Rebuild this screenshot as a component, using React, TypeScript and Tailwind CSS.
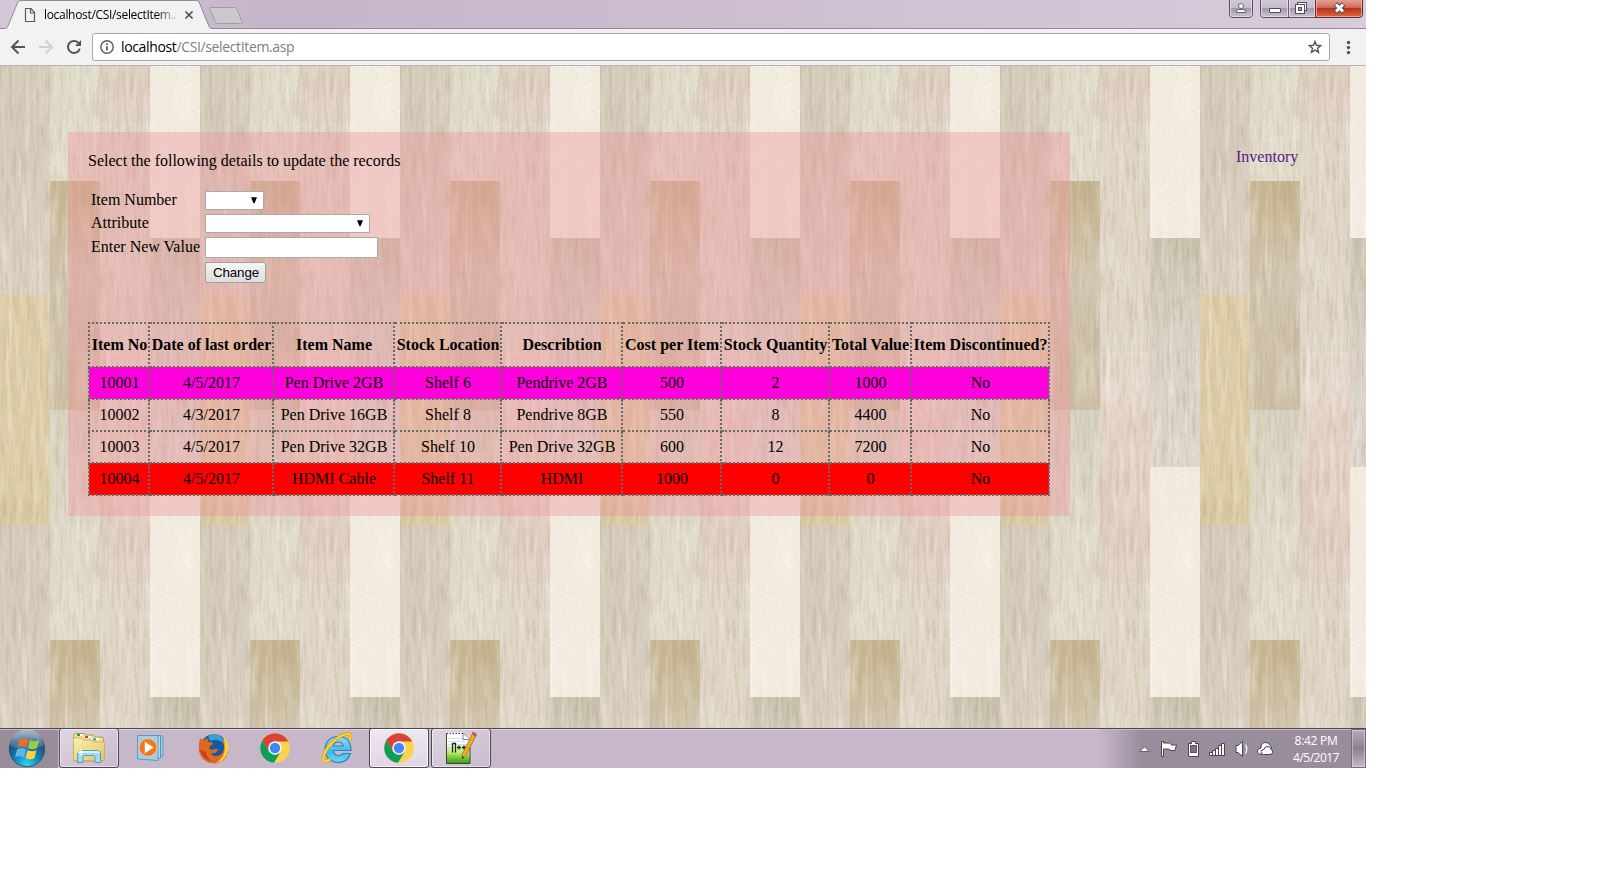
import React from "react";

const headers = [
  "Item No",
  "Date of last order",
  "Item Name",
  "Stock Location",
  "Describtion",
  "Cost per Item",
  "Stock Quantity",
  "Total Value",
  "Item Discontinued?",
];

const columnWidths = [60, 124, 121, 107, 121, 99, 108, 82, 138];

const rows = [
  { tone: "bg-[#ff00dc]", cells: ["10001", "4/5/2017", "Pen Drive 2GB", "Shelf 6", "Pendrive 2GB", "500", "2", "1000", "No"] },
  { tone: "", cells: ["10002", "4/3/2017", "Pen Drive 16GB", "Shelf 8", "Pendrive 8GB", "550", "8", "4400", "No"] },
  { tone: "", cells: ["10003", "4/5/2017", "Pen Drive 32GB", "Shelf 10", "Pen Drive 32GB", "600", "12", "7200", "No"] },
  { tone: "bg-[#ff0000]", cells: ["10004", "4/5/2017", "HDMI Cable", "Shelf 11", "HDMI", "1000", "0", "0", "No"] },
];

/* Repeating 200x459 wood plank texture */
function WoodBackground() {
  return (
    <svg className="absolute inset-0" width="1366" height="662" aria-hidden="true">
      <defs>
        <linearGradient id="p1" x1="0" y1="0" x2="0.3" y2="1">
          <stop offset="0" stopColor="#d1c8b5" />
          <stop offset="1" stopColor="#dcd1c3" />
        </linearGradient>
        <linearGradient id="p1b" x1="0" y1="0" x2="0" y2="1">
          <stop offset="0" stopColor="#decfa9" />
          <stop offset="1" stopColor="#ddcda4" />
        </linearGradient>
        <linearGradient id="p2" x1="0" y1="0" x2="0" y2="1">
          <stop offset="0" stopColor="#c6b48e" />
          <stop offset="0.45" stopColor="#d2c6b0" />
          <stop offset="1" stopColor="#cdbfa4" />
        </linearGradient>
        <linearGradient id="p2b" x1="0" y1="0" x2="0" y2="1">
          <stop offset="0" stopColor="#d6d2bf" />
          <stop offset="1" stopColor="#e0dac9" />
        </linearGradient>
        <linearGradient id="p3" x1="0" y1="0" x2="0" y2="1">
          <stop offset="0" stopColor="#e8dacf" />
          <stop offset="1" stopColor="#e1cec0" />
        </linearGradient>
        <linearGradient id="p4" x1="0" y1="0" x2="0" y2="1">
          <stop offset="0" stopColor="#c9c2ae" />
          <stop offset="0.4" stopColor="#d9d3c6" />
          <stop offset="1" stopColor="#ddd7ce" />
        </linearGradient>
        <filter id="grainDark" x="0" y="0" width="1" height="1">
          <feTurbulence type="fractalNoise" baseFrequency="0.3 0.035" numOctaves="4" seed="4" stitchTiles="stitch" />
          <feColorMatrix values="0 0 0 0 0.36  0 0 0 0 0.27  0 0 0 0 0.16  1.2 0 0 0 -0.52" />
        </filter>
        <filter id="grainLight" x="0" y="0" width="1" height="1">
          <feTurbulence type="fractalNoise" baseFrequency="0.16 0.018" numOctaves="3" seed="11" stitchTiles="stitch" />
          <feColorMatrix values="0 0 0 0 1  0 0 0 0 0.98  0 0 0 0 0.94  0 2 0 0 -0.85" />
        </filter>
        <filter id="speck" x="0" y="0" width="1" height="1">
          <feTurbulence type="fractalNoise" baseFrequency="0.5 0.3" numOctaves="2" seed="7" stitchTiles="stitch" />
          <feColorMatrix values="0 0 0 0 0.4  0 0 0 0 0.33  0 0 0 0 0.22  0 0 1 0 -0.45" />
        </filter>
        <pattern id="wood" width="200" height="459" patternUnits="userSpaceOnUse">
          <rect x="0" y="0" width="50" height="230" fill="url(#p1)" />
          <rect x="0" y="229" width="50" height="230" fill="url(#p1b)" />
          <rect x="50" y="0" width="50" height="115" fill="#e2dccb" />
          <rect x="50" y="115" width="50" height="229" fill="url(#p2)" />
          <rect x="50" y="344" width="50" height="115" fill="url(#p2b)" />
          <rect x="100" y="0" width="50" height="57" fill="#e1d1c3" />
          <rect x="100" y="57" width="50" height="229" fill="#e0d7c7" />
          <rect x="100" y="286" width="50" height="173" fill="url(#p3)" />
          <rect x="150" y="0" width="50" height="172" fill="#f3ece1" />
          <rect x="150" y="172" width="50" height="229" fill="url(#p4)" />
          <rect x="150" y="401" width="50" height="58" fill="#f2ebde" />
          <rect width="200" height="459" filter="url(#grainLight)" opacity="0.4" />
          <rect width="150" height="459" filter="url(#grainDark)" opacity="0.5" />
          <rect x="150" y="172" width="50" height="229" filter="url(#grainDark)" opacity="0.6" />
          <rect width="200" height="459" filter="url(#speck)" opacity="0.28" />
        </pattern>
      </defs>
      <rect width="1366" height="662" fill="url(#wood)" />
    </svg>
  );
}

function TabStrip() {
  return (
    <header className="relative h-[29px] bg-linear-to-r from-[#d4c8d8] from-0% via-[#c4b5c8] via-20% to-[#d8ccdb]">
      <svg className="absolute inset-0" width="1366" height="29" fill="none">
        <path d="M0 28.5H5.5C7 28 7.5 27 8 26L17.5 3C18.3 1.2 19 .5 21 .5H196C198 .5 198.800 1.200 199.500 3L208.500 25C209.500 27.500 210.500 28.500 212 28.500H1366" stroke="#94859a" />
        <path d="M6 29C7.500 28.500 8 27 8.500 26L18 3.500C18.700 1.700 19.500 1 21 1H196C197.500 1 198.300 1.700 199 3.500L208 25.500C209 28 210 29 211.500 29Z" fill="#f2f2f2" />
        <path d="M211 7.500H234C235.500 7.500 236.300 8 237 9.500L242 21.500C242.700 23 242 23.500 240.500 23.500H218.500C216.800 23.500 216 23 215.300 21.500L210 9.500C209.400 8.200 209.800 7.500 211 7.500Z" fill="#cbc9cc" stroke="#a598aa" />
        <path d="M25.500 8.500H31L34.500 12.500V21.500H25.500ZM30.500 8.500V13H34.500" stroke="#5a5a5a" strokeWidth="1.200" />
        <path d="M185.500 11.500L192.500 18.500M192.500 11.500L185.500 18.500" stroke="#505050" strokeWidth="1.700" />
      </svg>
      <div className="relative ml-11 w-[134px] pt-[6px] font-['Open_Sans',sans-serif] text-[12px] leading-[18px] tracking-[-0.32px] whitespace-nowrap text-black [mask-image:linear-gradient(to_right,black_112px,transparent_134px)]">
        localhost/CSI/selectItem.a
      </div>
      <svg className="absolute top-0 right-0" width="140" height="20" viewBox="1226 0 140 20">
        <defs>
          <linearGradient id="glass" x1="0" y1="0" x2="0" y2="1">
            <stop offset="0" stopColor="#d5cad9" />
            <stop offset=".48" stopColor="#c5b9ca" />
            <stop offset=".5" stopColor="#a295a9" />
            <stop offset="1" stopColor="#cfc4d4" />
          </linearGradient>
          <linearGradient id="close" x1="0" y1="0" x2="0" y2="1">
            <stop offset="0" stopColor="#e3a59a" />
            <stop offset=".45" stopColor="#d0705f" />
            <stop offset=".5" stopColor="#b93017" />
            <stop offset="1" stopColor="#dd6b45" />
          </linearGradient>
        </defs>
        <path d="M1229.500 -1V14Q1229.500 17.500 1233 17.500H1249Q1252.500 17.500 1252.500 14V-1Z" fill="url(#glass)" stroke="#5a4f60" />
        <path d="M1230.500 0V14Q1230.500 16.500 1233 16.500H1249Q1251.500 16.500 1251.500 14V0" fill="none" stroke="#e9e0ec" strokeOpacity=".8" />
        <path d="M1260.500 -1V14Q1260.500 17.500 1264 17.500H1315.500V-1Z" fill="url(#glass)" stroke="#5a4f60" />
        <path d="M1261.500 0V14Q1261.500 16.500 1264 16.500H1287.500V0M1289.500 0V16.500H1314.500V0" fill="none" stroke="#e9e0ec" strokeOpacity=".8" />
        <path d="M1288.500 0V17" stroke="#6a5f70" />
        <path d="M1315.500 -1V17.500H1359Q1362.500 17.500 1362.500 14V-1Z" fill="url(#close)" stroke="#5a2d30" />
        <path d="M1316.500 0V16.500H1359Q1361.500 16.500 1361.500 14V0" fill="none" stroke="#f3c0ae" strokeOpacity=".7" />
        <circle cx="1241" cy="6" r="2.500" fill="#fff" stroke="#6a6270" />
        <path d="M1236.500 12.500V11Q1237 9.500 1239 9.500H1243Q1245 9.500 1245.500 11V12.500Z" fill="#fff" stroke="#6a6270" />
        <rect x="1269.500" y="8.500" width="11" height="4" rx=".5" fill="#fff" stroke="#4f4b58" />
        <rect x="1297.500" y="2.500" width="9" height="8" fill="#fff" stroke="#4f4b58" />
        <rect x="1295.500" y="4.500" width="9" height="9" fill="#fff" stroke="#4f4b58" />
        <rect x="1298.500" y="7.500" width="3" height="3" fill="#a79cae" stroke="#4f4b58" />
        <path d="M1335.500 4L1343.500 12M1343.500 4L1335.500 12" stroke="#544850" strokeWidth="5" />
        <path d="M1336 4.500L1343 11.500M1343 4.500L1336 11.500" stroke="#fff" strokeWidth="3" />
      </svg>
    </header>
  );
}

function Toolbar() {
  return (
    <div className="flex h-[37px] items-start border-b border-[#b5b2b6] bg-[#f2f2f2] pt-1">
      <svg width="92" height="28" viewBox="0 33 92 28" fill="none">
        <path d="M25 47H12.500M18.500 40.500L12 47L18.500 53.500" stroke="#555" strokeWidth="2" />
        <path d="M39 47H51.500M45.500 40.500L52 47L45.500 53.500" stroke="#d0d0d0" strokeWidth="2" />
        <path d="M78.300 42.700A6 6 0 1 0 79.800 48.600" stroke="#555" strokeWidth="2" />
        <path d="M81 40V46H75Z" fill="#555" />
      </svg>
      <div className="flex h-7 w-[1238px] items-center rounded-[3px] border border-[#a8a8a8] bg-white pr-[7px] pl-[7px]">
        <svg width="14" height="14" viewBox="0 0 14 14" fill="none">
          <circle cx="7" cy="7" r="6.200" stroke="#5a5a5a" strokeWidth="1.400" />
          <path d="M7 6.200V10.500M7 3.300V5" stroke="#5a5a5a" strokeWidth="1.800" />
        </svg>
        <div className="ml-[7px] grow font-['Open_Sans',sans-serif] text-[14px] leading-[20px] tracking-[-0.36px] text-[#808080]">
          <span className="text-black">localhost</span>/CSI/selectItem.asp
        </div>
        <svg width="14" height="14" viewBox="0 0 14 14" fill="none">
          <path d="M7 1.500L8.500 5.300L12.700 5.600L9.500 8.200L10.500 12.300L7 10.100L3.500 12.300L4.500 8.200L1.300 5.600L5.500 5.300Z" stroke="#555" strokeWidth="1.400" />
        </svg>
      </div>
      <svg className="ml-[15px]" width="8" height="28" viewBox="0 0 8 28" fill="#555">
        <circle cx="3.500" cy="9.500" r="1.700" />
        <circle cx="3.500" cy="14.500" r="1.700" />
        <circle cx="3.500" cy="19.500" r="1.700" />
      </svg>
    </div>
  );
}

function SelectBox({ wide = false }: { wide?: boolean }) {
  return (
    <div className={`flex h-[19px] items-start justify-end rounded-[1px] border border-[#a9a9a9] bg-white pt-[5px] pr-[6px] ${wide ? "w-[165px]" : "w-[59px]"}`}>
      <svg width="6" height="7" viewBox="0 0 6 7">
        <path d="M0 .3H6L3.500 6.300H2.500Z" fill="#000" />
      </svg>
    </div>
  );
}

function StockTable() {
  return (
    <table className="w-[962px] table-fixed border-collapse text-center">
      <colgroup>
        {columnWidths.map((w, i) => (
          <col key={i} style={{ width: w }} />
        ))}
      </colgroup>
      <thead>
        <tr className="h-[44px]">
          {headers.map((h) => (
            <th key={h} className="border-2 border-dotted border-[#696969] p-0 pl-px leading-[18px] font-bold whitespace-nowrap">
              {h}
            </th>
          ))}
        </tr>
      </thead>
      <tbody>
        {rows.map((row) => (
          <tr key={row.cells[0]} className={`h-[32px] ${row.tone}`}>
            {row.cells.map((cell, i) => (
              <td key={i} className="border-2 border-dotted border-[#696969] p-0 pl-px leading-[18px] whitespace-nowrap">
                {cell}
              </td>
            ))}
          </tr>
        ))}
      </tbody>
    </table>
  );
}

function ChromeIcon() {
  return (
    <svg width="30" height="30" viewBox="-15 -15 30 30">
      <circle r="14.800" fill="#fdd34c" />
      <path d="M-12.800 -7.400A14.800 14.800 0 0 1 12.800 -7.200L13 -6.500H0L-6 3.500Z" fill="#da4437" />
      <path d="M-12.800 -7.400A14.800 14.800 0 0 0 -1 14.750L6 3.200L0 6.700L-5.900 3.300Z" fill="#109d58" />
      <circle r="6.800" fill="#f4f4f4" />
      <circle r="5.200" fill="#4486f4" />
    </svg>
  );
}

function ExplorerIcon() {
  return (
    <svg width="34" height="32" viewBox="0 0 34 32">
      <defs>
        <linearGradient id="folder" x1="0" y1="0" x2="1" y2="1">
          <stop offset="0" stopColor="#fbf1b3" />
          <stop offset="1" stopColor="#e4c55c" />
        </linearGradient>
      </defs>
      <path d="M2 29V3Q2 1.500 3.500 1.500H12L14 3H21L23 5H30Q31.500 5 31.500 6.500V29Z" fill="#f0dc8c" stroke="#b99c45" />
      <path d="M4 3H11M12 5H19M20 7H27" stroke="#fff" strokeWidth="2" />
      <path d="M5 3H8" stroke="#18a928" strokeWidth="2" />
      <path d="M13 5H16" stroke="#dc3a2a" strokeWidth="2" />
      <path d="M21 7.300H24" stroke="#2d8fe0" strokeWidth="2" />
      <path d="M1.500 28.500V7.500Q1.500 6 3 6H9L11 8H19L21 10H32.500V28.500Z" fill="url(#folder)" stroke="#c8ad58" strokeWidth=".8" />
      <path d="M5.500 30.500V22Q5.500 18.500 9 18.500H25Q28.500 18.500 28.500 22V30.500H23V25Q23 23.500 21.500 23.500H12.500Q11 23.500 11 25V30.500Z" fill="#a5d9f2" stroke="#4d9fc9" />
      <path d="M7 21Q7.500 20 9 20H25Q26.500 20 27 21" stroke="#e8f8ff" strokeWidth="1.500" fill="none" />
      <path d="M9 15L9.800 19L14 20L9.800 21L9 25L8.200 21L4 20L8.200 19Z" fill="#fff" />
    </svg>
  );
}

function MediaPlayerIcon() {
  return (
    <svg width="30" height="28" viewBox="0 0 30 28">
      <path d="M9 2H27V22L9 25Z" fill="#9fcbe3" stroke="#5f9fc4" />
      <path d="M7 1.500H24.500V24L7 25Z" fill="#b5daec" stroke="#4f95bd" />
      <path d="M1.500 1.500H22V26.500L1.500 25Z" fill="#9fd0e8" stroke="#5a9dc3" />
      <circle cx="12" cy="13.500" r="9" fill="#ef7a22" stroke="#fbd2ac" strokeWidth=".8" />
      <path d="M8.800 7.800L17.500 13.500L8.800 19.200Z" fill="#fff" />
    </svg>
  );
}

function FirefoxIcon() {
  return (
    <svg width="31" height="31" viewBox="0 0 31 31">
      <circle cx="16" cy="15" r="13.800" fill="#1b58a0" />
      <path d="M10 3Q16 -.5 22 3Q27 6 26 11Q21 5 12 8Z" fill="#3aa0d8" />
      <path d="M2.500 5L5.500 7.500Q7 5.500 10 5.200Q9 7.500 10.500 9L15 9.800Q15.500 11.500 12 13Q11 14.500 11.500 16Q14 17.500 17 16Q20 15.500 20 17Q17.500 21 12.500 20.500Q16 24.500 21 22.500Q26.500 20 26 13L24 7Q31 12 30 19Q27.500 30 16.500 30.500Q4 30 1 18.500Q0 11 2.500 5Z" fill="#e0681f" />
      <path d="M25 3Q31 9 30.500 16Q28 28.500 18 30Q27 24 26.800 15Q26.500 8 25 3Z" fill="#f9d23a" />
      <path d="M2 16Q4 26 14 29Q8 23 8 19Q4 18 2 16Z" fill="#c8401f" />
    </svg>
  );
}

function ExplorerBrowserIcon() {
  return (
    <svg width="32" height="32" viewBox="0 0 32 32">
      <defs>
        <linearGradient id="ie" x1="0" y1="0" x2="0" y2="1">
          <stop offset="0" stopColor="#8fe0fa" />
          <stop offset=".6" stopColor="#42b4e8" />
          <stop offset="1" stopColor="#6fd8f5" />
        </linearGradient>
      </defs>
      <path d="M30 18.500H12.500Q13 23.500 17.500 23.500Q20.500 23.500 21.800 21.500H29.500Q26.500 30.500 17 30.500Q4.500 29.500 4 17.500Q5 5 17 4.500Q30 5 30 18.500ZM12.500 14H22Q21.500 10 17.200 10Q13 10 12.500 14Z" fill="url(#ie)" stroke="#2884b8" strokeWidth="1.200" />
      <path d="M28.500 8Q31 2.500 27.500 2Q20 2 10.500 11Q1 22 2.500 28Q4 31 9 27.500" fill="none" stroke="#d9980d" strokeWidth="3.400" />
      <path d="M28.500 8Q31 2.500 27.500 2Q20 2 10.500 11Q1 22 2.500 28Q4 31 9 27.500" fill="none" stroke="#fbd33f" strokeWidth="2.200" />
    </svg>
  );
}

function NotepadIcon() {
  return (
    <svg width="32" height="34" viewBox="0 0 32 34">
      <defs>
        <linearGradient id="npp" x1="0" y1="0" x2="0" y2="1">
          <stop offset=".3" stopColor="#fff" />
          <stop offset=".65" stopColor="#b4ea64" />
          <stop offset="1" stopColor="#2c9c18" />
        </linearGradient>
      </defs>
      <path d="M1.500 2.500H18L25 9V32.500H1.500Z" fill="url(#npp)" stroke="#3e463c" />
      <path d="M3 2.500H18" stroke="#fff" strokeWidth="2" strokeDasharray="1.500 1.500" />
      <path d="M3 7.500H18M3 10.500H20M3 13.500H23M3 16.500H23" stroke="#c3dbe8" strokeWidth=".8" />
      <path d="M18 2.500V8.500H25" fill="#fff" stroke="#667" strokeWidth=".8" />
      <path d="M7.500 21.500V12M7.500 12.500H10.500V21.500M12 16.500H16M14 14.500V18.500M17 16.500H21M19 14.500V18.500" stroke="#1d261b" strokeWidth="1.300" fill="none" />
      <path d="M27.500 2.500L31 4.500L20.500 25.500L17 28L17.200 23.500Z" fill="#edaa2e" stroke="#9c6614" strokeWidth=".7" />
      <path d="M27 2.500L28 1L31.500 3L30.500 5.500Z" fill="#d06478" stroke="#8c3f4b" strokeWidth=".6" />
      <path d="M17 28L17.200 25L19.200 26.200Z" fill="#333" />
    </svg>
  );
}

function StartOrb() {
  return (
    <svg width="38" height="38" viewBox="-19 -19 38 38">
      <defs>
        <radialGradient id="orb" cx=".5" cy=".95" r=".95">
          <stop offset="0" stopColor="#2fd5f7" />
          <stop offset=".4" stopColor="#0b83b8" />
          <stop offset=".75" stopColor="#1d4d78" />
          <stop offset="1" stopColor="#5e86a2" />
        </radialGradient>
        <linearGradient id="shine" x1="0" y1="0" x2="0" y2="1">
          <stop offset="0" stopColor="#d9eaf2" />
          <stop offset="1" stopColor="#7fa9c3" stopOpacity=".5" />
        </linearGradient>
      </defs>
      <circle r="17.700" fill="url(#orb)" stroke="#3a5266" />
      <path d="M-16.500 -3A16.500 16.500 0 0 1 16.500 -3Q8 -1 0 0Q-9 0 -16.500 -3Z" fill="url(#shine)" opacity=".6" />
      <path d="M-7.500 -9Q-3.500 -12 1.500 -9.500L-.5 -1.500Q-5 -4 -9.500 -1.500Z" fill="#ec6a2e" />
      <path d="M3 -9Q7.500 -6.500 12.500 -9L10 -1Q5.500 1.500 1 -1Z" fill="#9ccc45" />
      <path d="M-10 .5Q-5.500 -2 -1 .5L-3 8.500Q-7.500 6 -12 8.500Z" fill="#62b4ea" />
      <path d="M.5 1Q5 3.500 9.500 1L7.500 9Q3 11.500 -1.500 9Z" fill="#fdd23c" />
    </svg>
  );
}

function TaskSlot({ active = false, bright = false, children }: { active?: boolean; bright?: boolean; children: React.ReactNode }) {
  const frame = active
    ? bright
      ? "rounded-[3px] border border-[#504658] bg-linear-to-b from-[#eee8ef] to-[#dfd6e2] shadow-[inset_0_0_0_1px_rgba(255,255,255,0.7)]"
      : "rounded-[3px] border border-[#504658] bg-linear-to-br from-[#e0d6e3] to-[#c8bacb] shadow-[inset_0_0_0_1px_rgba(255,255,255,0.5)]"
    : "border border-transparent";
  return (
    <div className="flex w-[62px] justify-center">
      <div className={`flex h-10 w-[60px] items-center justify-center ${frame}`}>{children}</div>
    </div>
  );
}

function Taskbar() {
  return (
    <footer className="flex h-10 bg-[#c6b7c9] shadow-[inset_0_1px_0_#50465a,inset_0_2px_0_#ddd3e0]">
      <div className="flex w-[58px] items-center bg-[#998d9c] pl-2 pt-px shadow-[inset_0_1px_0_#50465a,inset_0_2px_0_#c4bac6]">
        <StartOrb />
      </div>
      <TaskSlot active><ExplorerIcon /></TaskSlot>
      <TaskSlot><MediaPlayerIcon /></TaskSlot>
      <TaskSlot><FirefoxIcon /></TaskSlot>
      <TaskSlot><ChromeIcon /></TaskSlot>
      <TaskSlot><ExplorerBrowserIcon /></TaskSlot>
      <TaskSlot active bright><ChromeIcon /></TaskSlot>
      <TaskSlot active><NotepadIcon /></TaskSlot>
      <div className="ml-auto flex w-[266px] bg-linear-to-r from-[#c6b7c9] to-[#998d9c] to-[42px] shadow-[inset_0_1px_0_#50465a,inset_0_2px_0_#c4bac6]">
        <svg className="shrink-0" width="184" height="40" viewBox="1100 728 184 40" fill="#fff" stroke="#4a424e" strokeWidth="1">
          <path d="M1139.800 751.500L1144.500 746.800L1149.200 751.500Z" stroke="#665c6b" />
          <path d="M1161.500 741.500H1163.500V743H1169.500L1172 745H1176.500L1175 750.500H1171L1168.500 749H1163.500V756.500H1161.500Z" />
          <path d="M1191.500 741.500H1195.500V743.500H1198.500V756.500H1188.500V743.500H1191.500Z" />
          <rect x="1190.500" y="745.500" width="6" height="7" fill="#7e7282" stroke="#5c5261" />
          <path d="M1209.500 752.500H1212.500V755.500H1209.500ZM1212.500 750.500H1215.500V755.500H1212.500ZM1215.500 748.500H1218.500V755.500H1215.500ZM1218.500 745.500H1221.500V755.500H1218.500ZM1221.500 743.500H1224.500V755.500H1221.500Z" />
          <path d="M1236 745.500H1238L1242.500 741.500V756.500L1238 752.500H1236Z" />
          <path d="M1245.500 744.500Q1248 749 1245.500 753.500" fill="none" stroke="#fff" strokeWidth="1.300" />
          <path d="M1262 754.500Q1257.500 754.500 1257.500 751Q1258 748 1261 748Q1261 743 1265 742.500Q1269 742 1270 745.500Q1272 746 1271.500 748Z" />
          <path d="M1263.500 754.500Q1260.500 754 1261 751.500Q1261.500 749.500 1264 749.500Q1264.500 746 1268 746.500Q1270.500 746.500 1271 749.500Q1273 750 1272.500 752.500Q1272 754.500 1270 754.500Z" />
        </svg>
        <div className="flex w-[64px] flex-col items-center pt-1 font-['Open_Sans',sans-serif] text-[12px] leading-[17px] text-white">
          <span className="tracking-[-0.3px]">8:42 PM</span>
          <span className="tracking-[-0.5px]">4/5/2017</span>
        </div>
        <div className="mt-px ml-[3px] h-[39px] w-[15px] border border-[#756a79] bg-linear-to-b from-[#b5aab8] via-[#8d8191] to-[#c5b8c9] shadow-[inset_0_0_0_1px_rgba(255,255,255,0.35)]" />
      </div>
    </footer>
  );
}

export default function App() {
  return (
    <div className="h-[873px] w-[1600px] overflow-hidden bg-white">
      <div className="flex h-[768px] w-[1366px] flex-col">
        <TabStrip />
        <Toolbar />
        <main className="relative h-[662px] overflow-hidden font-['Liberation_Serif',serif] text-[16px] leading-[18px] text-black">
          <WoodBackground />
          <div className="relative flex items-start pt-[66px] pl-[68px]">
            <section className="h-[384px] w-[1002px] bg-[rgba(237,151,156,0.4)] p-5">
              <p>Select the following details to update the records</p>
              <form className="mt-[21px] ml-[3px] grid grid-cols-[114px_1fr] grid-rows-[23px_23px_25px_21px] items-start" onSubmit={(e) => e.preventDefault()}>
                <label>Item Number</label>
                <SelectBox />
                <label>Attribute</label>
                <SelectBox wide />
                <label className="pt-px whitespace-nowrap">Enter New Value</label>
                <input aria-label="Enter New Value" className="block h-[21px] w-[173px] border border-[#a9a9a9] bg-white" />
                <span />
                <button className="h-[21px] w-[61px] rounded-[2px] border border-[#a0a0a0] bg-linear-to-b from-[#f6f6f6] to-[#dddddd] pl-px font-['Liberation_Sans',sans-serif] text-[13.333px] leading-[17px] tracking-[-0.1px]">
                  Change
                </button>
              </form>
              <div className="mt-[39px]">
                <StockTable />
              </div>
            </section>
            <a href="#" className="mt-4 ml-[166px] text-[#551a8b]">Inventory</a>
          </div>
        </main>
        <Taskbar />
      </div>
    </div>
  );
}
